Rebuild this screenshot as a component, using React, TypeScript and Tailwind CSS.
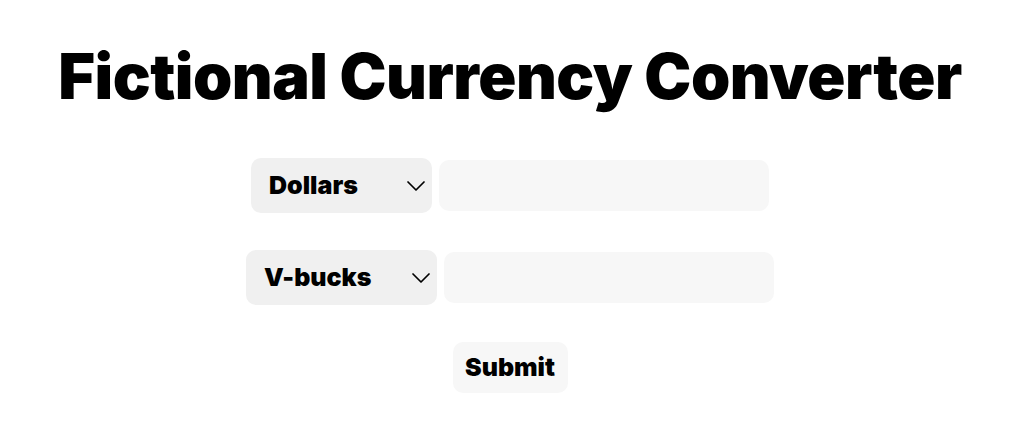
import { ChevronDown } from "lucide-react";

const font = { fontFamily: "Inter, 'Liberation Sans', sans-serif" };

function CurrencyRow({ value, options, width }: { value: string; options: string[]; width: string }) {
  return (
    <div className="flex items-center gap-[7px]">
      <div className={`relative ${width}`}>
        <select
          defaultValue={value}
          className="h-[55px] w-full appearance-none rounded-[10px] bg-[#f0f0f0] pl-[18px] text-[25px] font-black text-black outline-none"
        >
          {options.map((o) => (
            <option key={o}>{o}</option>
          ))}
        </select>
        <ChevronDown
          className="pointer-events-none absolute right-0 top-1/2 h-[32px] w-[32px] -translate-y-1/2 text-black"
          strokeWidth={1.3}
        />
      </div>
      <input
        type="text"
        className="h-[51px] w-[330px] rounded-[10px] bg-[#f7f7f7] px-4 text-[24px] outline-none"
      />
    </div>
  );
}

export default function App() {
  const currencies = ["Dollars", "V-bucks", "Robux", "Galleons"];

  return (
    <div className="flex min-h-[426px] flex-col items-center bg-white text-black" style={font}>
      <h1 className="mt-[38px] text-[63px] font-black leading-[76px] tracking-[-0.008em]">
        Fictional Currency Converter
      </h1>
      <div className="mt-[44px] flex flex-col items-center gap-[37px]">
        <CurrencyRow value="Dollars" options={currencies} width="w-[181px]" />
        <CurrencyRow value="V-bucks" options={currencies} width="w-[191px]" />
        <button className="h-[51px] w-[115px] rounded-[10px] bg-[#f7f7f7] text-[25px] font-black">
          Submit
        </button>
      </div>
    </div>
  );
}
